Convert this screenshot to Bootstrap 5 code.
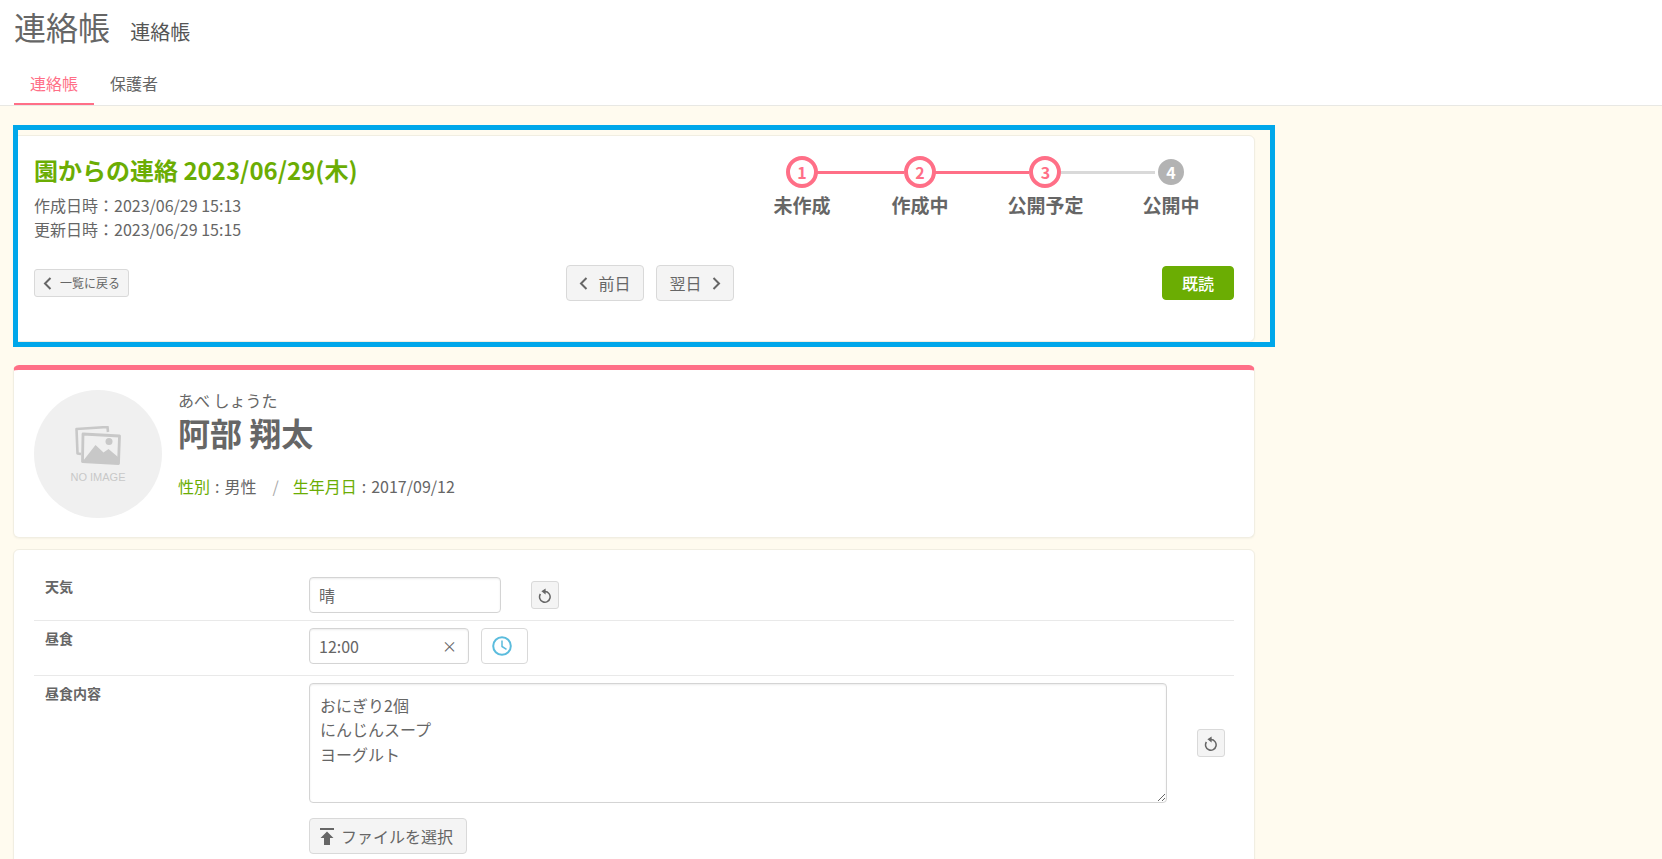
<!DOCTYPE html>
<html lang="ja">
<head>
  <meta charset="utf-8">
  <title>連絡帳</title>
  <link href="https://cdn.jsdelivr.net/npm/bootstrap@5.3.0/dist/css/bootstrap.min.css" rel="stylesheet">
  <style>
    html, body { height: 859px; overflow: hidden; }
    body { background: #fffbef; color: #666; font-family: "Noto Sans CJK JP", "Noto Sans", sans-serif; font-size: 16px; }
    .page-head { background: #fff; border-bottom: 1px solid #e8e8e4; height: 106px; padding: 2px 14px 0; }
    .page-title { font-size: 32px; font-weight: 400; color: #666; line-height: 48px; margin: 0; }
    .page-title small { font-size: 20px; color: #555; margin-left: 13px; }
    .tab-row { margin-top: 3px; }
    .tab-row .nav-link { color: #666; padding: 12px 16px 0; line-height: 24px; height: 46px; border-bottom: 2px solid transparent; }
    .tab-row .nav-link.active { color: #ff6f87; border-bottom-color: #ff6f87; }
    .main-col { width: 1242px; margin-left: 13px; padding-top: 29px; }
    .panel { background: #fff; border: 1px solid #f1eee2; border-radius: 6px; box-shadow: 0 1px 2px rgba(0,0,0,.04); margin-bottom: 11px; }
    .head-panel { height: 207px; padding: 17px 20px 20px; margin-bottom: 23px; position: relative; }
    .frame-mark { position: absolute; top: -11px; left: -1px; right: -21px; bottom: -6px; border: 5px solid #00a7ea; pointer-events: none; }
    .notice-title { color: #6bad03; font-size: 24px; font-weight: 700; line-height: 34px; margin: 0 0 6px; }
    .stamp { font-size: 16px; line-height: 24px; }
    .steps { margin-top: 3px; margin-right: 5px; }
    .step-item { position: relative; padding: 0 29.5px; text-align: center; font-size: 19px; font-weight: 700; line-height: 28px; }
    .step-dot { display: flex; align-items: center; justify-content: center; width: 32px; height: 32px; margin: 0 auto 3px; border: 4px solid #ff6f87; border-radius: 50%; color: #ff6f87; background: #fff; font-size: 16px; line-height: 1; }
    .step-item.todo .step-dot { background: #b3b3b3; border: 3px solid #fff; color: #fff; }
    .step-item::before { content: ""; position: absolute; top: 14.5px; right: calc(50% + 16px); width: 94px; height: 3px; background: #ff6f87; }
    .step-item:first-child::before { display: none; }
    .step-item.short { padding-left: 31.5px; }
    .step-item.short::before { width: 87px; right: calc(50% + 15px); }
    .step-item.todo::before { background: #d9d9d9; }
    .gray-btn { background: #f4f4f4; border: 1px solid #d9d9d9; color: #666; border-radius: 4px; }
    .gray-btn:hover { background: #eee; color: #666; border-color: #d9d9d9; }
    .back-btn { width: 95px; height: 28px; padding: 0; font-size: 12px; border-radius: 3px; }
    .day-btn { width: 78px; height: 36px; padding: 0; font-size: 16px; gap: 10px; }
    .read-btn { width: 72px; height: 34px; padding: 0; background: #6bad03; border-color: #6bad03; color: #fff; font-size: 16px; font-weight: 500; border-radius: 4px; }
    .nav-line { margin-top: 24px; }
    .day-group { margin-left: 437px; gap: 12px; }
    .profile-panel { border-top: 5px solid #ff6f87; height: 173px; padding: 20px; gap: 16px; }
    .no-photo { width: 128px; height: 128px; padding-top: 3px; border-radius: 50%; background: #f0f0f0; flex-direction: column; font-family: "Liberation Sans", sans-serif; font-size: 11px; color: #c8c8c8; }
    .kana { font-size: 16px; line-height: 20px; }
    .kid-name { font-size: 32px; font-weight: 700; line-height: 44px; margin: 0 0 20px; color: #666; }
    .kid-meta { line-height: 24px; }
    .kid-meta em { font-style: normal; color: #6bad03; }
    .kid-meta .colon { margin: 0 5px; }
    .kid-meta .sep { color: #aaa; margin: 0 14px 0 16px; }
    .form-panel { padding: 20px 20px 24px; margin: 0; }
    .form-line { border-bottom: 1px solid #e9e9e9; }
    .form-line:last-child { border-bottom: 0; }
    .weather-row { padding: 7px 0 7px; }
    .time-row { padding: 7px 0 11px; }
    .memo-row { padding-top: 7px; }
    .line-label { width: 275px; padding-left: 11px; font-size: 14px; font-weight: 700; flex: none; }
    .weather-row .line-label { margin-top: -1px; }
    .tx-input { border: 1px solid #d4d4d4; border-radius: 4px; box-shadow: inset 0 1px 2px rgba(0,0,0,.08); color: #666; height: 36px; padding: 0 9px; font-size: 16px; background: #fff; }
    .tx-input:focus { color: #666; }
    .weather-in { width: 192px; }
    .time-in { width: 160px; }
    .memo-in { width: 858px; height: 120px; padding: 9px 10px 10px; line-height: 24.3px; resize: both; }
    .mini-btn { width: 28px; height: 28px; padding: 0; border-radius: 3px; margin-left: 30px; }
    .clock-btn { width: 47px; height: 36px; padding: 0 5px 0 0; background: #fff; border: 1px solid #d9d9d9; border-radius: 4px; margin-left: 12px; }
    .file-btn { width: 158px; height: 36px; padding: 0 4px 0 0; font-size: 16px; gap: 6px; margin-top: 15px; }
    .time-clear { position: absolute; right: 12px; top: 7px; font-size: 15px; line-height: 22px; color: #666; }
  </style>
</head>
<body>

<div class="page-head">
  <h1 class="page-title">連絡帳 <small>連絡帳</small></h1>
  <ul class="nav tab-row">
    <li class="nav-item"><a class="nav-link active" href="#">連絡帳</a></li>
    <li class="nav-item"><a class="nav-link" href="#">保護者</a></li>
  </ul>
</div>

<div class="main-col">

  <div class="panel head-panel">
    <div class="d-flex justify-content-between align-items-start">
      <div>
        <h2 class="notice-title">園からの連絡 2023/06/29(木)</h2>
        <div class="stamp">作成日時：2023/06/29 15:13</div>
        <div class="stamp">更新日時：2023/06/29 15:15</div>
      </div>
      <div class="d-flex steps">
        <div class="step-item"><span class="step-dot">1</span>未作成</div>
        <div class="step-item short"><span class="step-dot">2</span>作成中</div>
        <div class="step-item"><span class="step-dot">3</span>公開予定</div>
        <div class="step-item todo"><span class="step-dot">4</span>公開中</div>
      </div>
    </div>
    <div class="d-flex align-items-center nav-line">
      <button class="btn gray-btn back-btn d-flex align-items-center justify-content-center gap-2">
        <svg width="9" height="13" viewBox="0 0 9 13" fill="none" stroke="#666" stroke-width="2"><path d="M7.5 1 2 6.5 7.5 12"/></svg>一覧に戻る
      </button>
      <div class="d-flex day-group">
        <button class="btn gray-btn day-btn d-flex align-items-center justify-content-center">
          <svg width="9" height="13" viewBox="0 0 9 13" fill="none" stroke="#666" stroke-width="2"><path d="M7.5 1 2 6.5 7.5 12"/></svg>前日
        </button>
        <button class="btn gray-btn day-btn d-flex align-items-center justify-content-center">翌日
          <svg width="9" height="13" viewBox="0 0 9 13" fill="none" stroke="#666" stroke-width="2"><path d="M1.5 1 7 6.5 1.5 12"/></svg>
        </button>
      </div>
      <button class="btn read-btn ms-auto">既読</button>
    </div>
    <div class="frame-mark"></div>
  </div>

  <div class="panel profile-panel d-flex">
    <div class="no-photo d-flex align-items-center justify-content-center flex-shrink-0">
      <svg width="46" height="39" viewBox="0 0 46 39">
        <path d="M6 28 2.500 27.500 1.500 3 32.500 1l.5 5" fill="none" stroke="#c8c8c8" stroke-width="2.600" stroke-linejoin="round"/>
        <path d="M8 8 44.500 10 43.500 37.500 7.500 35.500z" fill="none" stroke="#c8c8c8" stroke-width="2.800" stroke-linejoin="round"/>
        <path d="M8 35 20.500 19 28.500 26.500 33.500 23 43 31v6z" fill="#c8c8c8"/>
        <circle cx="34" cy="15.500" r="3.500" fill="#c8c8c8"/>
      </svg>
      <span class="mt-1">NO IMAGE</span>
    </div>
    <div>
      <div class="kana">あべ しょうた</div>
      <div class="kid-name">阿部 翔太</div>
      <div class="kid-meta"><em>性別</em><span class="colon">:</span>男性<span class="sep">/</span><em>生年月日</em><span class="colon">:</span>2017/09/12</div>
    </div>
  </div>

  <div class="panel form-panel">
    <div class="form-line d-flex weather-row">
      <div class="line-label">天気</div>
      <input class="tx-input weather-in" value="晴">
      <button class="btn gray-btn mini-btn d-flex align-items-center justify-content-center align-self-center">
        <svg width="14" height="15" viewBox="0 0 14 15" fill="none" stroke="#666" stroke-width="1.500"><path d="M2.400 6A5.300 5.300 0 1 0 7 3.600"/><path d="M7.600.5v6L3.400 3.300z" fill="#666" stroke="none"/></svg>
      </button>
    </div>
    <div class="form-line d-flex time-row">
      <div class="line-label">昼食</div>
      <div class="position-relative">
        <input class="tx-input time-in" value="12:00">
        <span class="time-clear">×</span>
      </div>
      <button class="clock-btn d-flex align-items-center justify-content-center">
        <svg width="20" height="20" viewBox="0 0 20 20" fill="none" stroke="#5bbcdd" stroke-width="2"><circle cx="10" cy="10" r="8.800"/><path d="M10 4.500v6l4.500 2.800" stroke-width="1.500"/></svg>
      </button>
    </div>
    <div class="form-line d-flex memo-row">
      <div class="line-label">昼食内容</div>
      <div>
        <div class="d-flex">
          <textarea class="tx-input memo-in d-block">おにぎり2個
にんじんスープ
ヨーグルト</textarea>
          <button class="btn gray-btn mini-btn d-flex align-items-center justify-content-center align-self-center">
            <svg width="14" height="15" viewBox="0 0 14 15" fill="none" stroke="#666" stroke-width="1.500"><path d="M2.400 6A5.300 5.300 0 1 0 7 3.600"/><path d="M7.600.5v6L3.400 3.300z" fill="#666" stroke="none"/></svg>
          </button>
        </div>
        <button class="btn gray-btn file-btn d-flex align-items-center justify-content-center">
          <svg width="16" height="17" viewBox="0 0 16 17" fill="#666"><path d="M1 0h14v2H1z"/><path d="M8 3.500 14.500 10H11v7H5v-7H1.500z"/></svg>ファイルを選択
        </button>
      </div>
    </div>
  </div>

</div>

<script src="https://cdn.jsdelivr.net/npm/bootstrap@5.3.0/dist/js/bootstrap.bundle.min.js"></script>
</body>
</html>
